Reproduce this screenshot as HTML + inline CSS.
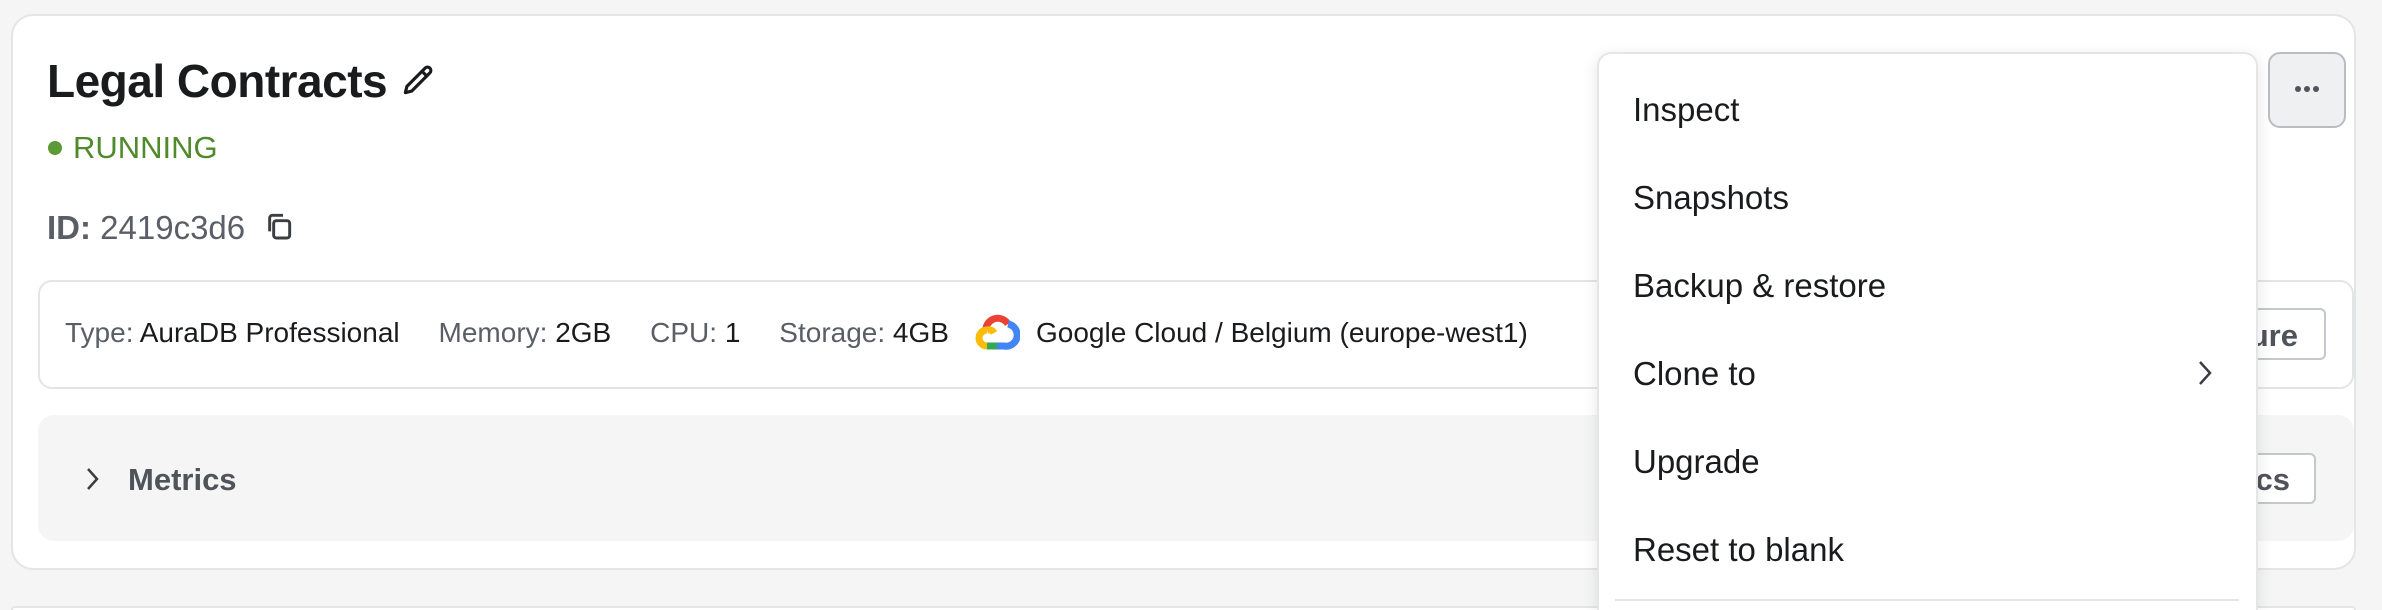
<!DOCTYPE html>
<html style="overflow:hidden;width:2382px;height:610px"><head><style>
*{box-sizing:border-box;margin:0;padding:0}
body{width:2382px;height:610px;overflow:hidden;background:#f4f5f4;font-family:"Liberation Sans",sans-serif;position:relative;color:#1a1b1d}
.abs{position:absolute}
.card{left:11px;top:14px;width:2345px;height:556px;background:#fff;border:2px solid #e3e5e6;border-radius:22px}
.card2{left:11px;top:606px;width:2345px;height:4px;background:#fff;border:2px solid #e3e5e6;border-bottom:none;border-radius:22px 22px 0 0}
.title{left:47px;top:54px;font-size:46px;font-weight:bold;letter-spacing:-0.5px;white-space:nowrap}
.run{left:48px;top:130px;font-size:31px;color:#4f8a2b}
.dot{left:48px;top:141px;width:14px;height:14px;border-radius:50%;background:#5c9a35}
.id{left:47px;top:209px;font-size:33px;color:#5a5e66}
.info{left:38px;top:280px;width:2316px;height:109px;border:2px solid #e3e5e6;border-radius:14px}
.infot{left:65px;top:317px;font-size:28px;color:#5a5e66;white-space:nowrap}
.infot b{font-weight:normal;color:#1a1b1d}
.metrics{left:38px;top:415px;width:2316px;height:126px;background:#f4f5f4;border-radius:16px}
.mt{left:128px;top:462px;font-size:31px;font-weight:bold;color:#4f535a}
.btn{border:2px solid #c4c8cc;border-radius:6px;background:#fff;font-weight:bold;font-size:31px;color:#4f535a;text-align:right}
.menu{left:1597px;top:52px;width:661px;height:558px;background:#fff;border:2px solid #e3e5e6;border-bottom:none;border-radius:14px 14px 0 0;box-shadow:0 4px 16px rgba(0,0,0,.10)}
.mi{left:1633px;font-size:33px;color:#1a1b1d}
.more{left:2268px;top:52px;width:78px;height:76px;background:#eef0f1;border:2px solid #b9bdc2;border-radius:12px}
</style></head><body>
<div class="abs card"></div>
<div class="abs card2"></div>
<div class="abs title">Legal Contracts <svg style="vertical-align:-2px" width="38" height="38" viewBox="0 0 24 24" fill="none" stroke="#1a1b1d" stroke-width="2" stroke-linecap="round" stroke-linejoin="round"><path d="M4 20l1-4L16.5 4.5a2 2 0 0 1 3 3L8 19z"/><path d="M14.5 6.5l3 3"/></svg></div>
<div class="abs dot"></div>
<div class="abs run" style="left:73px">RUNNING</div>
<div class="abs id"><b>ID:</b> 2419c3d6</div>
<svg class="abs" style="left:263px;top:210px" width="32" height="32" viewBox="0 0 24 24" fill="none" stroke="#3a3d42" stroke-width="2.2" stroke-linejoin="round"><rect x="8" y="8" width="12" height="13" rx="2"/><path d="M5 16V6a2 2 0 0 1 2-2h8"/></svg>
<div class="abs info"></div>
<div class="abs infot">Type: <b>AuraDB Professional</b>&nbsp;&nbsp;&nbsp;&nbsp; Memory: <b>2GB</b>&nbsp;&nbsp;&nbsp;&nbsp; CPU: <b>1</b>&nbsp;&nbsp;&nbsp;&nbsp; Storage: <b>4GB</b></div>
<svg class="abs" style="left:974px;top:312px" width="46" height="40" viewBox="0 0 46 40" fill="none" stroke-width="7">
<path d="M12 16a12 12 0 0 1 22-4" stroke="#ea4335"/>
<path d="M34 12a10 10 0 0 1 -4 22H23" stroke="#4285f4"/>
<path d="M23 34H13" stroke="#34a853"/>
<path d="M13 34a8 8 0 0 1 0-16" stroke="#fbbc05"/>
<path d="M13 18a6 6 0 0 1 7 3" stroke="#fbbc05"/>
</svg>
<div class="abs infot" style="left:1036px;color:#1a1b1d">Google Cloud / Belgium (europe-west1)</div>
<div class="abs btn" style="left:2150px;top:308px;width:176px;height:52px;padding:8px 26px 0 0">ure</div>
<div class="abs metrics"></div>
<svg class="abs" style="left:80px;top:464px" width="24" height="30" viewBox="0 0 24 30" fill="none" stroke="#3a3d42" stroke-width="2.5"><path d="M8 5l9 10-9 10"/></svg>
<div class="abs mt">Metrics</div>
<div class="abs btn" style="left:2150px;top:453px;width:166px;height:51px;padding:7px 24px 0 0">cs</div>
<div class="abs menu"></div>
<div class="abs mi" style="top:91px">Inspect</div>
<div class="abs mi" style="top:179px">Snapshots</div>
<div class="abs mi" style="top:267px">Backup &amp; restore</div>
<div class="abs mi" style="top:355px">Clone to</div>
<svg class="abs" style="left:2192px;top:356px" width="24" height="34" viewBox="0 0 24 34" fill="none" stroke="#3a3d42" stroke-width="2.5"><path d="M8 6l10 11-10 11"/></svg>
<div class="abs mi" style="top:443px">Upgrade</div>
<div class="abs mi" style="top:531px">Reset to blank</div>
<div class="abs" style="left:1615px;top:599px;width:624px;height:2px;background:#e3e5e6"></div>
<div class="abs more"></div>
<div class="abs" style="left:2295px;top:86px;width:24px;height:6px">
<span class="abs" style="left:0;width:6px;height:6px;border-radius:50%;background:#4f535a"></span>
<span class="abs" style="left:9px;width:6px;height:6px;border-radius:50%;background:#4f535a"></span>
<span class="abs" style="left:18px;width:6px;height:6px;border-radius:50%;background:#4f535a"></span>
</div>
</body></html>
